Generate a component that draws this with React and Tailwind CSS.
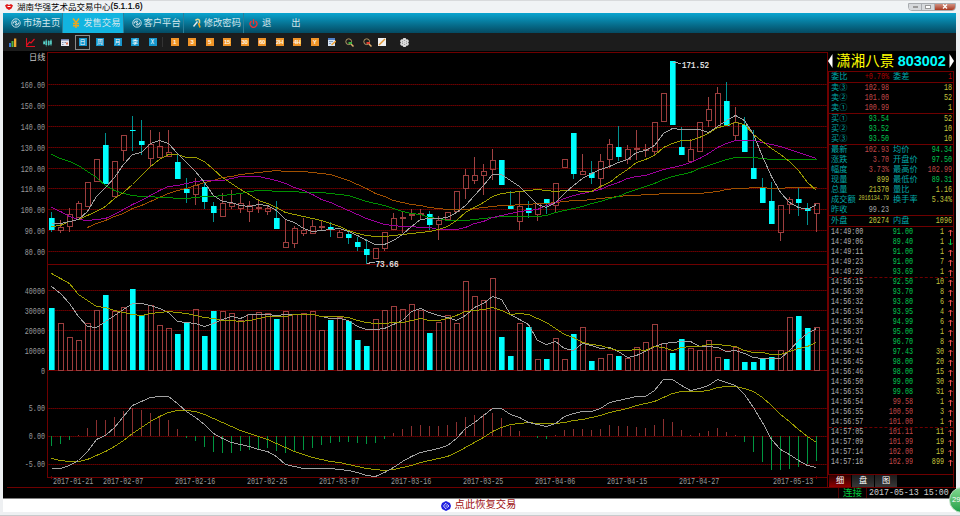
import React from 'react';
import { Settings, Power } from 'lucide-react';

// Each candle: [up / down, high, body top, body bottom, low], three units to a pixel
const candles = [
  ['d', 486, 504, 540, 548], ['u', 512, 531, 544, 550], ['u', 475, 493, 532, 546], ['u', 454, 460, 505, 505],
  ['u', 397, 397, 472, 472], ['u', 328, 328, 398, 398], ['d', 249, 285, 403, 403], ['u', 334, 334, 442, 442],
  ['u', 256, 256, 304, 335], ['d', 198, 240, 245, 304], ['d', 210, 273, 285, 317], ['u', 241, 283, 328, 352],
  ['u', 247, 289, 325, 325], ['u', 241, 307, 322, 322], ['d', 312, 336, 387, 387], ['d', 385, 418, 430, 461],
  ['u', 385, 406, 436, 467], ['d', 397, 412, 458, 478], ['d', 457, 470, 490, 517], ['u', 430, 460, 502, 502],
  ['u', 422, 460, 472, 479], ['u', 430, 460, 479, 490], ['u', 454, 466, 487, 517], ['u', 448, 472, 478, 490],
  ['u', 466, 474, 487, 497], ['d', 454, 504, 537, 537], ['u', 510, 576, 596, 596], ['u', 528, 535, 583, 595],
  ['u', 504, 541, 553, 560], ['u', 510, 528, 553, 553], ['u', 515, 528, 532, 544], ['d', 516, 531, 541, 561],
  ['u', 540, 547, 566, 566], ['d', 544, 552, 566, 583], ['d', 562, 576, 591, 604], ['d', 567, 597, 616, 643],
  ['u', 595, 595, 629, 629], ['u', 547, 547, 599, 604], ['u', 490, 505, 541, 541], ['u', 486, 502, 506, 550],
  ['u', 479, 492, 496, 510], ['u', 477, 491, 494, 510], ['d', 485, 492, 525, 542], ['u', 500, 511, 527, 572],
  ['u', 487, 487, 511, 511], ['u', 424, 424, 488, 488], ['u', 357, 376, 418, 447], ['u', 322, 376, 395, 404],
  ['u', 342, 363, 380, 436], ['u', 297, 331, 362, 392], ['d', 331, 331, 407, 407], ['d', 424, 467, 477, 477],
  ['u', 424, 469, 517, 540], ['d', 454, 474, 491, 505], ['u', 461, 461, 497, 515], ['d', 448, 449, 461, 492],
  ['u', 400, 400, 469, 487], ['u', 328, 328, 355, 355], ['d', 250, 250, 374, 389], ['u', 312, 363, 377, 377],
  ['d', 335, 369, 385, 404], ['u', 313, 333, 388, 418], ['u', 267, 283, 331, 355], ['d', 229, 291, 323, 333],
  ['u', 286, 298, 331, 343], ['u', 241, 296, 302, 330], ['u', 283, 298, 302, 322], ['u', 217, 217, 308, 316],
  ['u', 130, 130, 218, 218], ['d', 33, 33, 227, 227], ['d', 231, 291, 315, 315], ['u', 267, 297, 338, 338],
  ['u', 217, 217, 308, 308], ['u', 142, 178, 215, 231], ['u', 112, 130, 235, 235], ['d', 98, 154, 228, 228],
  ['u', 172, 217, 259, 273], ['d', 202, 225, 307, 307], ['d', 241, 354, 387, 387], ['d', 386, 411, 459, 459],
  ['d', 397, 453, 524, 524], ['u', 465, 465, 551, 573], ['u', 441, 447, 466, 492], ['d', 415, 449, 460, 498],
  ['d', 460, 474, 483, 527], ['u', 460, 460, 493, 546],
];

const priceLines = [
  { color: '#a05000', start: 4, data: [533, 520, 511, 500, 489, 476, 466, 453, 441, 431, 422, 414, 405, 397, 390, 383, 378, 373, 369, 366, 363, 362, 364, 364, 364, 366, 370, 374, 381, 391, 402, 416, 429, 440, 450, 458, 463, 467, 472, 475, 477, 478, 479, 476, 473, 468, 466, 465, 463, 462, 460, 460, 458, 454, 451, 450, 448, 446, 443, 438, 437, 436, 434, 432, 431, 430, 430, 430, 429, 427, 423, 419, 416, 414, 412, 412, 416, 416, 413, 412, 412, 412] },
  { color: '#009000', start: 0, data: [314, 324, 335, 347, 363, 381, 405, 420, 430, 436, 439, 440, 442, 442, 445, 445, 443, 440, 438, 436, 433, 429, 425, 421, 422, 423, 424, 425, 427, 428, 428, 430, 432, 437, 445, 453, 460, 467, 475, 484, 489, 494, 501, 506, 510, 511, 511, 508, 506, 502, 500, 499, 498, 498, 498, 496, 487, 481, 475, 468, 461, 454, 446, 438, 428, 418, 409, 399, 387, 378, 372, 366, 356, 346, 336, 329, 323, 323, 323, 326, 328, 328, 328, 328, 328, 328] },
  { color: '#9c009c', start: 0, data: [471, 485, 498, 507, 511, 508, 505, 493, 477, 463, 451, 435, 420, 409, 405, 401, 395, 392, 391, 390, 386, 380, 379, 380, 385, 392, 401, 413, 421, 434, 447, 458, 470, 482, 493, 505, 515, 524, 527, 529, 530, 531, 533, 537, 538, 538, 532, 521, 513, 503, 495, 490, 485, 481, 477, 466, 457, 444, 437, 431, 425, 418, 406, 396, 386, 379, 375, 368, 357, 352, 346, 337, 325, 309, 292, 281, 272, 271, 271, 277, 284, 290, 299, 307, 316, 324] },
  { color: '#9c9c00', start: 0, data: [530, 525, 514, 508, 496, 483, 468, 446, 427, 402, 376, 349, 328, 313, 313, 321, 323, 335, 358, 382, 400, 417, 433, 450, 460, 471, 487, 494, 500, 506, 512, 521, 530, 540, 550, 557, 559, 559, 556, 553, 550, 546, 543, 539, 528, 510, 487, 472, 456, 438, 430, 428, 423, 421, 418, 421, 424, 420, 421, 423, 423, 408, 396, 375, 357, 338, 329, 315, 292, 280, 272, 270, 262, 249, 231, 225, 217, 222, 252, 275, 294, 312, 333, 362, 398, 421] },
  { color: '#a0a0a0', start: 0, data: [521, 521, 513, 507, 484, 440, 413, 382, 344, 314, 306, 281, 271, 281, 310, 338, 364, 397, 436, 454, 457, 467, 469, 463, 466, 481, 509, 518, 535, 544, 542, 538, 536, 543, 556, 572, 583, 583, 570, 553, 530, 507, 505, 505, 502, 488, 465, 435, 405, 374, 373, 390, 410, 435, 462, 471, 457, 429, 405, 385, 370, 357, 349, 338, 327, 307, 301, 286, 249, 235, 238, 238, 238, 247, 229, 211, 195, 211, 252, 318, 378, 428, 457, 471, 478, 463] },
];

// Tops of the volume bars; the bars are coloured by their own up / down list
const volumes = [144, 189, 231, 240, 189, 150, 105, 154, 141, 87, 165, 136, 195, 204, 222, 189, 147, 228, 153, 153, 159, 182, 162, 156, 159, 177, 154, 162, 159, 153, 210, 180, 171, 183, 240, 258, 177, 150, 138, 147, 132, 150, 219, 186, 165, 189, 64, 108, 120, 54, 231, 289, 189, 201, 297, 297, 234, 297, 222, 201, 303, 294, 282, 288, 294, 261, 246, 192, 250, 279, 237, 264, 270, 240, 291, 297, 262, 306, 306, 297, 291, 270, 171, 168, 204, 201];
const volumeDown = [0, 6, 9, 10, 14, 15, 17, 18, 25, 31, 33, 34, 35, 42, 50, 51, 53, 55, 58, 60, 63, 69, 70, 75, 77, 78, 79, 80, 83, 84];

const volumeLines = [
  { color: '#a0a0a0', start: 0, data: [78, 100, 130, 168, 198, 202, 183, 167, 148, 129, 130, 135, 146, 158, 184, 188, 190, 199, 190, 177, 169, 176, 163, 163, 163, 166, 163, 163, 163, 163, 169, 174, 176, 181, 198, 207, 208, 204, 194, 180, 153, 145, 157, 167, 171, 181, 165, 141, 129, 109, 118, 163, 177, 194, 241, 254, 244, 264, 271, 250, 255, 266, 262, 274, 292, 286, 274, 258, 249, 247, 243, 244, 259, 259, 262, 274, 270, 280, 291, 294, 294, 294, 270, 240, 219, 204] },
  { color: '#9c9c00', start: 0, data: [40, 54, 70, 102, 120, 139, 143, 150, 158, 163, 166, 160, 156, 154, 157, 161, 165, 171, 175, 180, 181, 184, 181, 174, 169, 169, 168, 163, 163, 163, 169, 169, 170, 173, 181, 187, 190, 190, 187, 186, 180, 175, 181, 181, 174, 165, 154, 151, 148, 141, 151, 163, 160, 163, 175, 187, 204, 222, 232, 246, 253, 255, 264, 271, 271, 268, 271, 260, 262, 270, 262, 260, 259, 254, 253, 256, 259, 270, 276, 277, 282, 283, 274, 264, 259, 247] },
];

const macdBars = [560, 554, 540, 525, 504, 480, 480, 471, 453, 446, 451, 459, 468, 482, 507, 534, 544, 561, 576, 579, 579, 575, 572, 570, 566, 573, 581, 575, 570, 564, 555, 551, 548, 548, 549, 554, 551, 537, 519, 508, 499, 495, 499, 499, 495, 486, 471, 466, 462, 459, 474, 498, 513, 529, 534, 537, 525, 510, 508, 508, 512, 507, 496, 498, 498, 501, 504, 495, 477, 486, 510, 525, 519, 515, 504, 516, 525, 548, 576, 606, 630, 632, 627, 621, 612, 603];

const macdLines = [
  { color: '#9c9c00', start: 0, data: [595, 601, 604, 604, 598, 586, 573, 559, 541, 520, 501, 484, 468, 457, 451, 451, 454, 462, 474, 486, 498, 510, 520, 529, 539, 549, 562, 573, 584, 591, 598, 603, 607, 612, 619, 625, 628, 632, 629, 622, 616, 607, 602, 595, 588, 577, 562, 547, 531, 515, 501, 493, 489, 487, 489, 490, 490, 487, 482, 477, 472, 466, 458, 451, 445, 437, 431, 424, 411, 400, 395, 394, 394, 390, 383, 380, 379, 384, 394, 413, 436, 462, 485, 508, 530, 548] },
  { color: '#a0a0a0', start: 0, data: [626, 626, 616, 602, 574, 538, 526, 502, 468, 437, 424, 413, 409, 409, 431, 455, 471, 494, 521, 534, 546, 554, 560, 568, 575, 590, 612, 620, 625, 626, 626, 626, 628, 631, 638, 646, 650, 637, 621, 603, 589, 577, 572, 566, 555, 535, 506, 486, 465, 445, 446, 462, 473, 487, 494, 499, 491, 469, 461, 455, 454, 444, 427, 422, 415, 409, 409, 390, 358, 358, 377, 391, 386, 377, 359, 367, 376, 403, 441, 488, 539, 567, 584, 600, 616, 623] },
];

const priceAxis = [['160.00', 84], ['150.00', 105], ['140.00', 126], ['130.00', 147], ['120.00', 168], ['110.00', 188], ['100.00', 209], ['90.00', 230], ['80.00', 251]];
const volumeAxis = [['40000', 290], ['30000', 310], ['20000', 330], ['10000', 350], ['0', 370]];
const macdAxis = [['5.00', 408], ['0.00', 436], ['-5.00', 464]];
const dates = [['2017-01-21', 53], ['2017-02-07', 103], ['2017-02-16', 175], ['2017-02-25', 247], ['2017-03-07', 319], ['2017-03-16', 391], ['2017-03-25', 463], ['2017-04-06', 535], ['2017-04-15', 607], ['2017-04-27', 679], ['2017-05-13', 773]];

const asks = [['卖③', '102.98', '18'], ['卖②', '101.00', '52'], ['卖①', '100.99', '1']];
const bids = [['买①', '93.54', '52'], ['买②', '93.52', '10'], ['买③', '93.50', '10']];

const red = 'text-[#c04848]';
const green = 'text-[#00c850]';
const yellow = 'text-[#c4c43c]';
const gray = 'text-[#a8a8a8]';

const stats = [
  ['最新', '102.93', red, '均价', '94.34', green],
  ['涨跌', '3.70', red, '开盘价', '97.50', green],
  ['幅度', '3.73%', red, '最高价', '102.99', red],
  ['现量', '899', yellow, '最低价', '89.31', green],
  ['总量', '21370', yellow, '量比', '1.16', yellow],
  ['成交额', '2016134.79', yellow, '换手率', '5.34%', yellow],
  ['昨收', '99.23', gray, '', '', gray],
];

const ticks = [
  ['14:49:00', '91.00', '1', 'up'], ['14:49:06', '89.40', '1', 'down'], ['14:49:11', '91.00', '1', 'up'],
  ['14:49:23', '91.00', '7', 'up'], ['14:49:28', '93.69', '1', 'up'], ['14:56:15', '92.50', '10', 'up'],
  ['14:56:30', '93.70', '8', 'up'], ['14:56:32', '93.80', '6', 'up'], ['14:56:34', '93.95', '4', 'up'],
  ['14:56:36', '94.99', '6', 'up'], ['14:56:37', '95.00', '1', 'up'], ['14:56:41', '96.70', '8', 'up'],
  ['14:56:43', '97.43', '30', 'up'], ['14:56:45', '98.00', '20', 'up'], ['14:56:46', '98.00', '15', 'up'],
  ['14:56:50', '99.00', '30', 'up'], ['14:56:53', '99.08', '31', 'up'], ['14:56:54', '99.58', '1', 'up'],
  ['14:56:55', '100.50', '3', 'up'], ['14:56:57', '101.00', '1', 'up'], ['14:57:05', '101.11', '11', 'up'],
  ['14:57:09', '101.99', '19', 'up'], ['14:57:14', '102.00', '19', 'up'], ['14:57:18', '102.99', '899', 'up'],
];

const PRICE_TOP = 50;
const LOWER_TOP = 260;
const barX = (i) => 49 + i * 9;
const toY = (v, top) => top + Math.floor(v / 3);

function Curve({ line, top }) {
  const points = line.data.map((v, i) => `${barX(i + line.start) + 2.5},${toY(v, top) + 0.5}`).join(' ');
  return <polyline points={points} fill="none" stroke={line.color} strokeWidth="1" />;
}

function AxisLabel({ text, x, y, anchor = 'end' }) {
  return (
    <text
      x={x}
      y={y}
      textAnchor={anchor}
      textLength={text.length * 4.04}
      lengthAdjust="spacingAndGlyphs"
      fontSize="8.5"
      fill="#9a9a9a"
      fontFamily="'Liberation Mono', monospace"
    >
      {text}
    </text>
  );
}

function Chart() {
  return (
    <svg className="block w-[825px] h-[447px] shrink-0" viewBox="3 51 825 447">
      <g shapeRendering="crispEdges">
        {/* grid */}
        {[...priceAxis, ...volumeAxis.slice(0, 4), ...macdAxis].map(([label, y]) => (
          <g key={label}>
            <line x1="47" x2="827" y1={y + 0.5} y2={y + 0.5} stroke="#400000" />
            <line x1="47" x2="827" y1={y + 0.5} y2={y + 0.5} stroke="#6a0000" strokeDasharray="1 1" />
          </g>
        ))}
        {[52, 264, 370, 477].map((y) => (
          <line key={y} x1="47" x2="827" y1={y + 0.5} y2={y + 0.5} stroke="#6e0000" />
        ))}
        <line x1="7" x2="828" y1="487.5" y2="487.5" stroke="#6e0000" />
        <line x1="47.5" x2="47.5" y1="52" y2="478" stroke="#6e0000" />
        <line x1="827.5" x2="827.5" y1="52" y2="487" stroke="#6e0000" />
        {dates.map(([d, x], i) => {
          const tick = i === 0 ? 51.5 : i === 10 ? 816.5 : x + 20.5;
          return <line key={d} x1={tick} x2={tick} y1="476" y2="479" stroke="#6e0000" />;
        })}

        {/* candles */}
        {candles.map(([dir, high, top, bottom, low], i) => {
          const x = barX(i);
          const yTop = toY(top, PRICE_TOP);
          const yBottom = Math.max(toY(bottom, PRICE_TOP), yTop + 1);
          const down = dir === 'd';
          const wick = down ? '#009090' : '#a04242';
          return (
            <g key={i}>
              <line x1={x + 2.5} x2={x + 2.5} y1={toY(high, PRICE_TOP)} y2={yTop} stroke={wick} />
              <line x1={x + 2.5} x2={x + 2.5} y1={yBottom} y2={toY(low, PRICE_TOP)} stroke={wick} />
              {down ? (
                <>
                  <rect x={x} y={yTop} width="6" height={yBottom - yTop} fill="#009c9c" />
                  <rect x={x} y={yTop} width="5" height={yBottom - yTop} fill="#00ffff" />
                </>
              ) : (
                <rect x={x + 0.5} y={yTop + 0.5} width="5" height={Math.max(yBottom - yTop - 1, 1)} fill="none" stroke="#9c3e3e" />
              )}
            </g>
          );
        })}
        {priceLines.map((line) => <Curve key={line.color} line={line} top={PRICE_TOP} />)}

        {/* volume */}
        {volumes.map((v, i) => {
          const y = toY(v, LOWER_TOP);
          return volumeDown.includes(i) ? (
            <g key={i}>
              <rect x={barX(i)} y={y} width="6" height={370 - y} fill="#009c9c" />
              <rect x={barX(i)} y={y} width="5" height={370 - y} fill="#00ffff" />
            </g>
          ) : (
            <rect key={i} x={barX(i) + 0.5} y={y + 0.5} width="5" height={370 - y} fill="none" stroke="#9c3e3e" />
          );
        })}
        {volumeLines.map((line) => <Curve key={line.color} line={line} top={LOWER_TOP} />)}

        {/* macd */}
        {macdBars.map((v, i) => (
          <line
            key={i}
            x1={barX(i) + 2.5}
            x2={barX(i) + 2.5}
            y1="436"
            y2={toY(v, LOWER_TOP)}
            stroke={v > 529 ? '#009640' : '#8c3030'}
          />
        ))}
        {macdLines.map((line) => <Curve key={line.color} line={line} top={LOWER_TOP} />)}
        <polyline points="367,264 372,262 375,262" fill="none" stroke="#aaa" />
        <polyline points="673,62 678,63 681,64" fill="none" stroke="#aaa" />
      </g>

      {priceAxis.map(([label, y]) => <AxisLabel key={label} text={label} x={45} y={y + 4} />)}
      {volumeAxis.map(([label, y]) => <AxisLabel key={label} text={label} x={45} y={y + 4} />)}
      {macdAxis.map(([label, y]) => <AxisLabel key={label} text={label} x={45} y={y + 3} />)}
      {dates.map(([label, x]) => <AxisLabel key={label} text={label} x={x} y={484} anchor="start" />)}
      <text x="29" y="60" fontSize="8.2" fill="#c8c8c8" fontFamily="'Noto Sans CJK SC', sans-serif">日线</text>
      <g fontFamily="'Liberation Mono', monospace" fontSize="8.5" fill="#f0f0f0" stroke="#f0f0f0" strokeWidth="0.2">
        <text x="682" y="68" textLength="27" lengthAdjust="spacingAndGlyphs">171.52</text>
        <text x="375.5" y="267" textLength="23" lengthAdjust="spacingAndGlyphs">73.66</text>
      </g>
    </svg>
  );
}

function Num({ children, className = '', size = 'text-[6.75px]' }) {
  return (
    <span className={`inline-block font-['Liberation_Mono',monospace] scale-y-125 ${size} ${className}`}>{children}</span>
  );
}

function QuoteRow({ label, value, color, label2, value2, color2 }) {
  return (
    <div className="flex h-[10px] items-center pl-[2px] pr-[1px] leading-none whitespace-nowrap">
      <span className="w-[26px] shrink-0 text-[#00a8a8]">{label}</span>
      <span className="flex w-[32px] shrink-0 justify-end">
        <Num className={color} size={value.length > 8 ? 'text-[5.1px]' : 'text-[6.75px]'}>{value}</Num>
      </span>
      <span className="ml-[4px] flex-1 text-[#00a8a8]">{label2}</span>
      <Num className={color2}>{value2}</Num>
    </div>
  );
}

function Sidebar() {
  return (
    <div className="flex w-[128px] shrink-0 flex-col font-['Liberation_Sans','Noto_Sans_CJK_SC',sans-serif] text-[8.2px]">
      <div className="flex h-[20px] items-center justify-between pr-[2px] leading-none">
        <svg className="h-[14px] w-[5px]" viewBox="0 0 5 14"><path d="M4.500 0L0 7l4.500 7z" fill="#fff" /></svg>
        <span className="text-[14.5px] text-[#ffff00]">潇湘八景</span>
        <span className="text-[14.4px] font-bold text-[#00ffff]">803002</span>
        <svg className="h-[14px] w-[5px]" viewBox="0 0 5 14"><path d="M.5 0L5 7 .5 14z" fill="#fff" /></svg>
      </div>
      <div className="flex h-[403px] w-[126px] flex-col border-x border-t border-[#6e0000]">
        <div className="flex h-[11px] flex-col border-b border-[#6e0000]">
          <QuoteRow label="委比" value="+0.70%" color="text-[#b00000]" label2="委差" value2="1" color2="text-[#b00000]" />
        </div>
        <div className="flex h-[31px] flex-col border-b border-[#6e0000]">
          {asks.map(([label, price, qty]) => (
            <QuoteRow key={label} label={label} value={price} color={red} label2="" value2={qty} color2={yellow} />
          ))}
        </div>
        <div className="flex h-[31px] flex-col border-b border-[#6e0000]">
          {bids.map(([label, price, qty]) => (
            <QuoteRow key={label} label={label} value={price} color={green} label2="" value2={qty} color2={yellow} />
          ))}
        </div>
        <div className="flex h-[71px] flex-col border-b border-[#6e0000]">
          {stats.map(([label, value, color, label2, value2, color2]) => (
            <QuoteRow key={label} label={label} value={value} color={color} label2={label2} value2={value2} color2={color2} />
          ))}
        </div>
        <div className="flex h-[11px] flex-col border-b border-[#6e0000]">
          <QuoteRow label="外盘" value="20274" color={yellow} label2="内盘" value2="1096" color2={yellow} />
        </div>
        <div className="flex flex-1 flex-col">
          {ticks.map(([time, price, qty, dir], i) => (
            <div
              key={time}
              className={`flex h-[10px] shrink-0 items-center pl-[2px] leading-none ${i === 5 || i === 20 ? 'border-t border-dashed border-[#6e0000]' : ''}`}
            >
              <Num className="w-[34px] text-[#b0b0b0]">{time}</Num>
              <Num className={`w-[48px] text-right ${i < 17 ? green : red}`}>{price}</Num>
              <Num className={`w-[31px] text-right ${yellow}`}>{qty}</Num>
              <svg className="ml-[4px] h-[7px] w-[5px]" viewBox="0 0 5 7">
                <path
                  d={dir === 'up' ? 'M2.500 7V1M.5 3l2-2 2 2' : 'M2.500 0v6M.5 4l2 2 2-2'}
                  fill="none"
                  stroke={dir === 'up' ? '#f05050' : '#00c040'}
                />
              </svg>
            </div>
          ))}
        </div>
      </div>
      <div className="flex h-[13px] w-[126px] border-t border-r border-[#6e0000] pl-[1px] text-white">
        <div className="h-[12px] w-[22px] bg-linear-to-b from-[#300000] to-[#900000] text-center leading-[12px]">细</div>
        <div className="ml-px h-[12px] w-[22px] bg-linear-to-b from-[#1c1c1c] to-[#383838] text-center leading-[12px]">盘</div>
        <div className="ml-px h-[12px] w-[22px] bg-linear-to-b from-[#1c1c1c] to-[#383838] text-center leading-[12px]">图</div>
      </div>
      <div className="flex h-[11px] items-center border-t border-[#6e0000] pl-[10px]">
        <span className="h-[10px] w-[29px] border-x border-[#500000] text-center text-[9.5px] leading-[10px] text-[#00c83c]">连接</span>
        <span className="ml-[2px] font-['Liberation_Mono',monospace] text-[8.3px] leading-none whitespace-nowrap text-[#d0d0d0]">
          <span className="inline-block scale-y-115 whitespace-pre">2017-05-13 15:00</span>
        </span>
      </div>
    </div>
  );
}

function SyncIcon() {
  return (
    <svg className="h-[10px] w-[10px]" viewBox="0 0 10 10" fill="none" stroke="#c4dce4" strokeWidth="1">
      <circle cx="5" cy="5" r="4.200" />
      <path d="M2.300 5.500c0-2 2-3 3.200-2.200L4 5M7.700 4.500c0 2-2 3-3.200 2.200L6 5" strokeWidth="1.100" />
    </svg>
  );
}

function YenIcon() {
  return (
    <svg className="h-[10px] w-[10px]" viewBox="0 0 10 10" fill="none" stroke="#e8a820" strokeWidth="1.500">
      <path d="M2 .5l3 4 3-4M5 4.500V10M2 5.500h6M2 7.800h6" />
    </svg>
  );
}

function KeyIcon() {
  return (
    <svg className="h-[10px] w-[10px]" viewBox="0 0 10 10" fill="none">
      <path d="M3.500 2.500C4.500 .8 7 .8 7.500 2.500v3" stroke="#e8d890" strokeWidth="1.500" />
      <path d="M5.500 3.500L1.500 8.500" stroke="#e8e8e8" strokeWidth="1.400" />
      <path d="M6.500 5l1.500 4.500" stroke="#f0a020" strokeWidth="1.700" />
    </svg>
  );
}

const menu = [
  { label: '市场主页', icon: <SyncIcon /> },
  { label: '发售交易', icon: <YenIcon />, active: true },
  { label: '客户平台', icon: <SyncIcon /> },
  { label: '修改密码', icon: <KeyIcon /> },
];

function MenuBar() {
  return (
    <div className="flex h-[20px] bg-linear-to-b from-[#0aa5d0] to-[#044a62] font-['Noto_Sans_CJK_SC',sans-serif] text-[9.3px] text-[#d2e6ec]">
      {menu.map(({ label, icon, active }) => (
        <div
          key={label}
          className={`flex w-[60.250px] items-center gap-[2px] border-r border-[#2a7f9a] pl-[8px] leading-none whitespace-nowrap ${active ? 'bg-[#12b4e0]' : ''}`}
        >
          {icon}
          {label}
        </div>
      ))}
      <div className="flex items-center pl-[5px] leading-none">
        <Power size={9} color="#f03030" strokeWidth={3.5} />
        <span className="ml-[4px]">退</span>
        <span className="ml-[20px]">出</span>
      </div>
    </div>
  );
}

function ToolCell({ children, selected }) {
  return (
    <div className={`flex h-[15px] w-[15px] shrink-0 items-center justify-center ${selected ? 'border border-[#8a8a8a]' : ''}`}>
      {children}
    </div>
  );
}

function Magnifier({ color }) {
  return (
    <svg className="h-[9px] w-[9px]" viewBox="0 0 9 9" fill="none">
      <circle cx="3.700" cy="3.700" r="2.900" stroke="#b09868" />
      <path d="M6 6l2.500 2.500" stroke="#e0b070" strokeWidth="1.500" />
      <path d="M3.500 5h3.500" stroke={color} strokeWidth="2" />
    </svg>
  );
}

function Toolbar() {
  return (
    <div className="flex h-[18px] items-center gap-[2.5px] bg-[#1c1c1c] pl-[2px] font-['Noto_Sans_CJK_SC',sans-serif] leading-none">
      <ToolCell>
        <svg className="h-[9px] w-[9px]" viewBox="0 0 9 9">
          <path d="M1 5h2v4H1z" fill="#3c78d8" /><path d="M3.500 3h2v6h-2z" fill="#50b040" /><path d="M6 .5h2.300V9H6z" fill="#f0a830" />
        </svg>
      </ToolCell>
      <ToolCell>
        <svg className="h-[9px] w-[9px]" viewBox="0 0 9 9" fill="none" stroke="#e01020" strokeWidth="1.200">
          <path d="M.5 0v8.500H9M1 7l2.500-3 1.500 1L8.500 1" />
        </svg>
      </ToolCell>
      <ToolCell>
        <svg className="h-[9px] w-[9px]" viewBox="0 0 9 9">
          <path d="M.3 3.500H2v2.500H.3zM2.500 2.500h1.600v4.500H2.500zM4.900 3h1.600v4H4.900zM7.100 2.500h1.600v4H7.100z" fill="#70e8e0" />
          <path d="M1 2.500v4.500M3.300 1v7.500M5.700 2v6M8 1v7" stroke="#38b0a8" strokeWidth=".7" />
        </svg>
      </ToolCell>
      <ToolCell>
        <svg className="h-[8px] w-[8px]" viewBox="0 0 8 8">
          <path d="M0 1h8v7H0z" fill="#e8e8f0" /><path d="M0 1h8v1.500H0z" fill="#7080b0" />
          <path d="M1 4h1.500v1H1zM3.500 4H5v1H3.500zM1 6h1.500v1H1z" fill="#8090b0" /><path d="M5 4.500h2v2H5z" fill="#e07050" />
        </svg>
      </ToolCell>
      {['日', '周', '月', '季', 'X'].map((t, i) => (
        <ToolCell key={t} selected={i === 0}>
          <span className="flex h-[8px] w-[8px] items-center justify-center bg-[#1596cc] text-[6px] text-white">{t}</span>
        </ToolCell>
      ))}
      <div className="-ml-px h-[10px] w-px bg-[#333]" />
      <div className="ml-[2px] flex gap-[2.5px]">
        {['1', '3', '5', '15', '30', '60', '2H', '4H', 'Y'].map((t) => (
          <ToolCell key={t}>
            <span className="flex h-[8px] w-[8px] items-center justify-center bg-[#f09428] font-['Liberation_Sans',sans-serif] text-[6px] font-bold tracking-[-0.3px] text-[#fff4e0]">{t}</span>
          </ToolCell>
        ))}
        <ToolCell>
          <svg className="h-[8px] w-[8px]" viewBox="0 0 8 8">
            <path d="M0 0h7v8H0z" fill="#d8e4f4" /><path d="M0 0h7v2H0z" fill="#5080c8" /><path d="M1 3.500h4M1 5.500h2" stroke="#708cb0" strokeWidth=".8" />
            <path d="M3.500 7L8 3" stroke="#f0a030" strokeWidth="1.500" />
          </svg>
        </ToolCell>
        <ToolCell><Magnifier color="#40b040" /></ToolCell>
        <ToolCell><Magnifier color="#e04030" /></ToolCell>
      </div>
      <div className="-ml-[3px] flex items-center gap-[8px]">
        <ToolCell>
          <svg className="h-[8px] w-[8px]" viewBox="0 0 8 8">
            <path d="M0 0h8v8H0z" fill="#f0f0f0" /><path d="M1 7l6-6" stroke="#e09838" strokeWidth="1.400" />
          </svg>
        </ToolCell>
        <ToolCell><Settings size={9} color="#dcdcdc" strokeWidth={5} /></ToolCell>
      </div>
    </div>
  );
}

function TitleBar() {
  return (
    <div className="flex h-[13px] items-center border-t border-[#d8dadc] bg-[#f0f3f5] pb-px pl-[5px] text-black">
      <svg className="h-[7px] w-[8px]" viewBox="0 0 8 7">
        <path d="M0 2.500L2 1l2 1 2-1 2 1.500-1.500 3L4 7 1.500 5.500z" fill="#e01818" />
        <path d="M2.500 3.500h3" stroke="#fff" />
      </svg>
      <span className="ml-[4px] font-['Noto_Sans_CJK_SC',sans-serif] text-[8.5px] leading-none whitespace-nowrap">湖南华强艺术品交易中心</span>
      <span className="font-['Liberation_Sans',sans-serif] text-[8.6px] leading-none [-webkit-text-stroke:0.2px]">(5.1.1.6)</span>
      <div className="mr-[4px] ml-auto flex h-[8px] overflow-hidden rounded-b-sm border border-[#a8acb0] text-white">
        <div className="flex w-[13px] items-center justify-center border-r border-[#a8acb0] bg-[#d6d9dc]"><span className="h-[2px] w-[5px] border border-[#999] bg-white" /></div>
        <div className="flex w-[13px] items-center justify-center border-r border-[#a8acb0] bg-[#d6d9dc]"><span className="h-[4px] w-[6px] border border-[#999] bg-white" /></div>
        <div className="flex w-[20px] items-center justify-center bg-linear-to-b from-[#d09080] to-[#a83820]">
          <svg className="h-[5px] w-[6px]" viewBox="0 0 6 5"><path d="M1 .5l4 4M5 .5l-4 4" stroke="#fff" strokeWidth="1.300" /></svg>
        </div>
      </div>
    </div>
  );
}

function App() {
  return (
    <div className="relative flex h-[516px] w-[960px] flex-col overflow-hidden bg-[#eef0f2]">
      <TitleBar />
      <div className="mr-[4px] ml-[3px] flex flex-col">
        <MenuBar />
        <Toolbar />
        <div className="flex h-[447px] overflow-hidden bg-black">
          <Chart />
          <Sidebar />
        </div>
        <div className="flex h-[14px] items-center justify-center gap-[4px] border-t border-[#808080] bg-white pr-[2px]">
          <svg className="h-[10px] w-[10px]" viewBox="0 0 10 10">
            <path d="M5 0l4 2 1 3-1 3-4 2-4-2-1-3 1-3z" fill="#2020e0" />
            <path d="M5 2L2.500 5 5 8M5.500 3L8 5 5.500 7M4.500 5h1.500" fill="none" stroke="#fff" strokeWidth=".8" />
          </svg>
          <span className="font-['Liberation_Sans','Noto_Sans_CJK_SC',sans-serif] text-[10.3px] leading-none text-[#a01010]">点此恢复交易</span>
        </div>
      </div>
      <div className="mt-auto h-px bg-[#c8cacc]" />

      {/* floating assistant ball */}
      <div className="absolute top-[487px] left-[949px] flex h-[26px] w-[26px] items-center rounded-full border border-[#b8e0c0] bg-linear-to-b from-[#80d890] to-[#18a048] pl-[2px] font-['Liberation_Sans',sans-serif] text-[7.5px] text-white">
        29
      </div>
    </div>
  );
}

export default App;
